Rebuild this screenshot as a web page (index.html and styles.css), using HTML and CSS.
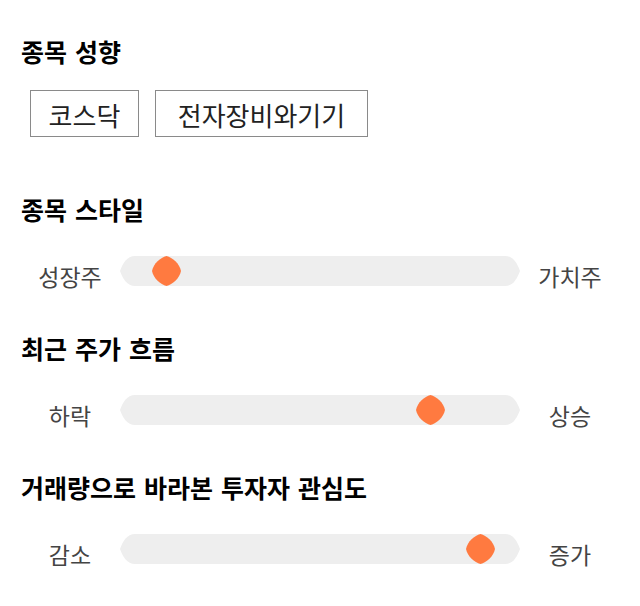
FILE: index.html
```html
<!DOCTYPE html>
<html lang="ko">
<head>
<meta charset="utf-8">
<link rel="stylesheet" href="styles.css">
</head>
<body>
<div class="page">
  <section class="sec sec-chips">
    <h2 class="title">종목 성향</h2>
    <div class="chips">
      <span class="chip chip-a">코스닥</span>
      <span class="chip chip-b">전자장비와기기</span>
    </div>
  </section>
  <section class="sec">
    <h2 class="title">종목 스타일</h2>
    <div class="slider-row">
      <span class="label">성장주</span>
      <div class="track"><span class="thumb" style="left: 32px"></span></div>
      <span class="label">가치주</span>
    </div>
  </section>
  <section class="sec">
    <h2 class="title">최근 주가 흐름</h2>
    <div class="slider-row">
      <span class="label">하락</span>
      <div class="track"><span class="thumb" style="left: 296px"></span></div>
      <span class="label">상승</span>
    </div>
  </section>
  <section class="sec">
    <h2 class="title">거래량으로 바라본 투자자 관심도</h2>
    <div class="slider-row">
      <span class="label">감소</span>
      <div class="track"><span class="thumb" style="left: 346px"></span></div>
      <span class="label">증가</span>
    </div>
  </section>
</div>
</body>
</html>
```

FILE: styles.css
```css
html, body {
  margin: 0;
  padding: 0;
  background: #ffffff;
}
body {
  font-family: "Noto Sans CJK KR", "Noto Sans", sans-serif;
  color: #111;
}
.page {
  padding: 36px 20px 0 20px;
}
.sec {
  display: flex;
  flex-direction: column;
  gap: 32px;
  padding-bottom: 47px;
}
.sec-chips {
  gap: 24px;
  padding-bottom: 57px;
}
.title {
  margin: 0;
  padding-left: 1px;
  font-size: 25px;
  font-weight: 700;
  line-height: 30px;
  height: 30px;
  color: #000;
  word-spacing: 1px;
}
.chips {
  display: flex;
  gap: 16px;
  padding-left: 10px;
}
.chip {
  display: flex;
  align-items: center;
  justify-content: center;
  border: 1px solid #8a8a8a;
  font-size: 26px;
  color: #222;
  line-height: 1;
  padding-top: 2px;
  box-sizing: content-box;
}
.chip-a { width: 107px; height: 43px; }
.chip-b { width: 211px; height: 43px; }
.slider-row {
  display: flex;
  align-items: center;
  height: 30px;
}
.label {
  width: 100px;
  text-align: center;
  font-size: 23px;
  color: #444;
  line-height: 30px;
  padding-top: 10px;
}
.track {
  position: relative;
  width: 400px;
  height: 30px;
  background: #eeeeee;
  clip-path: path("M0 15 C 3 7, 7 0, 15 0 H 385 C 393 0, 397 7, 400 15 C 397 23, 393 30, 385 30 H 15 C 7 30, 3 23, 0 15 Z");
}
.thumb {
  position: absolute;
  top: 0;
  width: 29px;
  height: 30px;
  background: #ff7a40;
  clip-path: path("M14.5 0 C 20.5 1.5, 27.5 7.5, 29 15 C 27.5 22.5, 20.5 28.5, 14.5 30 C 8.5 28.5, 1.5 22.5, 0 15 C 1.5 7.5, 8.5 1.5, 14.5 0 Z");
}
```
